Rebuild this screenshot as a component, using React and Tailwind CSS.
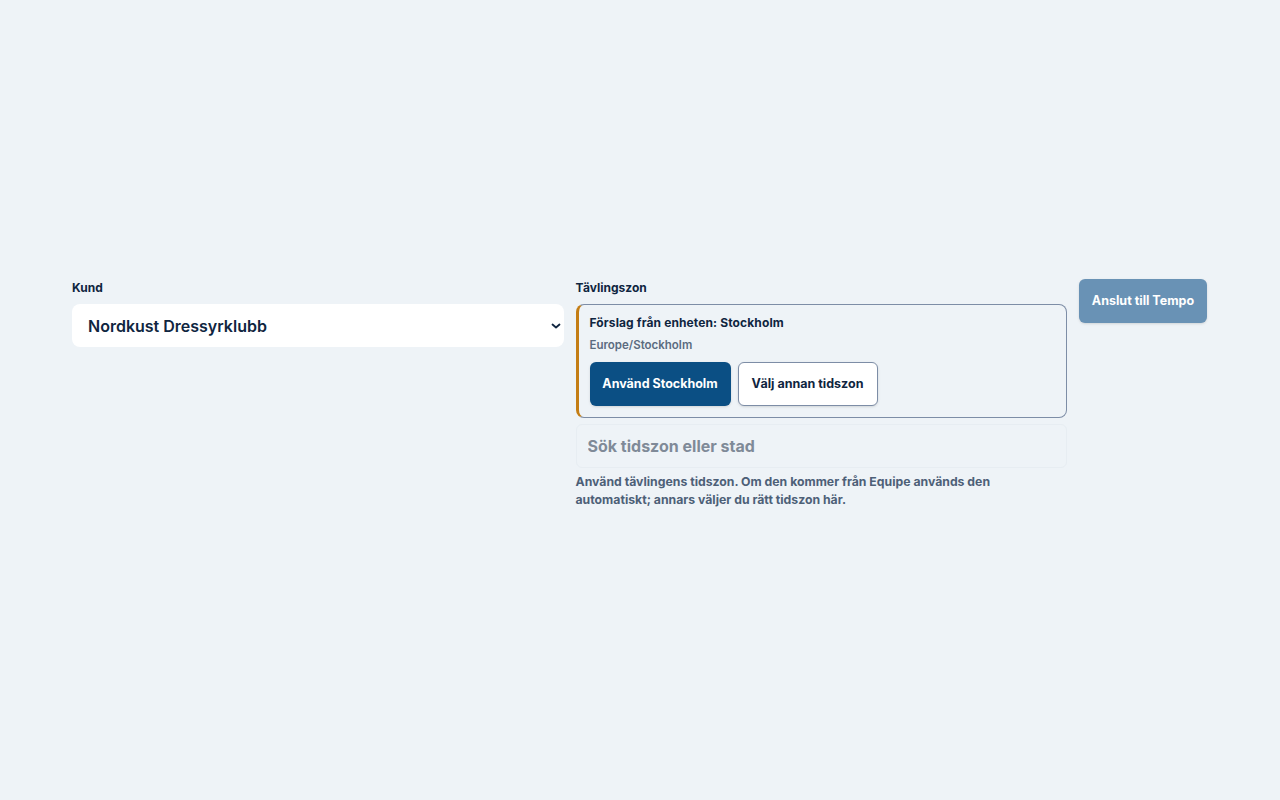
import React, { useState } from 'react';

const customers = ['Nordkust Dressyrklubb', 'Västra Ridklubben', 'Sörby Hästsport'];

const App = () => {
    const [customer, setCustomer] = useState(customers[0]);
    const [query, setQuery] = useState('');

    return (
        <div className="min-h-screen bg-[#eef3f7] pl-[72px] pr-[73px] pt-[280px] font-['Inter',sans-serif] text-[#0f2540]">
            <div className="grid grid-cols-[1fr_1fr_128px] gap-3 items-start">
                {/* kund */}
                <div>
                    <label className="block text-[12px] font-bold leading-4 mb-2">Kund</label>
                    <div className="relative">
                        <select
                            value={customer}
                            onChange={(e) => setCustomer(e.target.value)}
                            className="w-full h-[43px] appearance-none bg-white rounded-lg pl-[16px] pr-8 text-[16px] font-semibold text-[#0f2540] outline-none"
                        >
                            {customers.map((c) => <option key={c}>{c}</option>)}
                        </select>
                        <svg className="absolute right-0 top-1/2 -translate-y-1/2 w-[16px] h-[16px] pointer-events-none" viewBox="0 0 16 16" fill="none">
                            <path d="M4.5 6.5 8 9.5l3.5-3" stroke="#0f2540" strokeWidth="1.8" strokeLinecap="round" strokeLinejoin="round" />
                        </svg>
                    </div>
                </div>

                {/* tävlingszon */}
                <div>
                    <label className="block text-[12px] font-bold leading-4 mb-2">Tävlingszon</label>
                    <div className="rounded-lg border border-[#7d8da6] border-l-[3px] border-l-[#c47d14] pl-[11px] pr-3 pt-[10px] pb-[11px]">
                        <p className="text-[12px] font-bold leading-4 tracking-[0.01em]">Förslag från enheten: Stockholm</p>
                        <p className="text-[11.5px] font-semibold text-[#5b6b80] leading-4 mt-[6px]">Europe/Stockholm</p>
                        <div className="flex gap-[7px] mt-[9px]">
                            <button className="h-[44px] w-[141px] rounded-md bg-[#0b4f84] text-white text-[12.5px] font-bold shadow-sm">
                                Använd Stockholm
                            </button>
                            <button className="h-[44px] w-[140px] rounded-md bg-white border border-[#7d8da6] text-[12.5px] font-bold shadow-sm">
                                Välj annan tidszon
                            </button>
                        </div>
                    </div>
                    <input
                        value={query}
                        onChange={(e) => setQuery(e.target.value)}
                        placeholder="Sök tidszon eller stad"
                        className="mt-[6px] w-full h-[44px] rounded-md border border-[#e7edf2] bg-transparent px-[11px] text-[16px] font-bold outline-none placeholder:text-[#7f8a98]"
                    />
                    <p className="mt-[5px] text-[12.25px] font-bold leading-[18px] text-[#4d6077] pr-16">
                        Använd tävlingens tidszon. Om den kommer från Equipe används den automatiskt; annars väljer du rätt tidszon här.
                    </p>
                </div>

                {/* anslut */}
                <button className="h-[44px] w-[128px] -mt-[1px] rounded-md bg-[#6992b5] text-white text-[12.5px] font-bold shadow-sm">
                    Anslut till Tempo
                </button>
            </div>
        </div>
    );
};

export default App;
